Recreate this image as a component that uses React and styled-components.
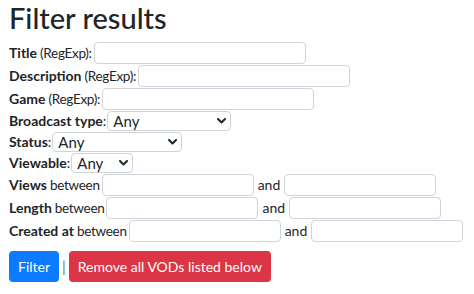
import React from "react";
import styled, { createGlobalStyle } from "styled-components";

const GlobalStyle = createGlobalStyle`
  body {
    margin: 0;
    background: #fff;
    color: #212529;
    font-family: Lato, "Open Sans", sans-serif;
    font-size: 14px;
  }
`;

const Page = styled.div`
  padding: 1px 9px;
`;

const Heading = styled.h2`
  font-size: 29px;
  font-weight: 500;
  line-height: 1.2;
  margin: 0 0 6px;
`;

const Form = styled.form`
  display: flex;
  flex-direction: column;
  gap: 1px;
`;

const Row = styled.div`
  display: flex;
  align-items: center;
  white-space: nowrap;
  line-height: 20px;
`;

const Label = styled.strong`
  font-weight: 700;
`;

const Hint = styled.span`
  margin-left: 3px;
  font-size: 13.5px;
  letter-spacing: -0.3px;
`;

const TextInput = styled.input`
  box-sizing: border-box;
  width: ${(p) => p.$w}px;
  height: 22px;
  margin-left: ${(p) => (p.$gap ?? 2)}px;
  padding: 0 6px;
  border: 1px solid #ced4da;
  border-radius: 4px;
  background: #fff;
  font: inherit;
  outline: none;
`;

const SelectWrap = styled.span`
  position: relative;
  display: inline-flex;
  margin-left: 1px;
`;

const Select = styled.select`
  box-sizing: border-box;
  appearance: none;
  width: ${(p) => p.$w}px;
  height: 20px;
  padding: 0 20px 0 5px;
  border: 1px solid #ced4da;
  border-radius: 4px;
  background: #fff;
  color: #212529;
  font: inherit;
  font-size: 15px;
  line-height: 18px;
  outline: none;
`;

const Chevron = styled.svg`
  position: absolute;
  right: 5px;
  top: 7px;
  width: 9px;
  height: 6px;
  pointer-events: none;
`;

const And = styled.span`
  margin: 0 4px 0 4px;
`;

const Actions = styled.div`
  display: flex;
  align-items: center;
  gap: 3px;
  margin-top: 8px;
`;

const Button = styled.button`
  height: 31px;
  padding: 0 9px;
  border: none;
  border-radius: 4px;
  color: #fff;
  font: inherit;
  font-size: 14px;
  background: ${(p) => (p.$variant === "danger" ? "#dc3545" : "#0d7bff")};
`;

const Divider = styled.span`
  color: #6c757d;
  font-size: 15px;
`;

function Dropdown({ width }) {
  return (
    <SelectWrap>
      <Select $w={width} defaultValue="any">
        <option value="any">Any</option>
      </Select>
      <Chevron viewBox="0 0 9 6">
        <path d="M1 1l3.5 3.5L8 1" fill="none" stroke="#212529" strokeWidth="2" strokeLinecap="round" strokeLinejoin="round" />
      </Chevron>
    </SelectWrap>
  );
}

function RangeRow({ label }) {
  return (
    <Row>
      <Label>{label}</Label>
      <Hint>between</Hint>
      <TextInput $w={152} />
      <And>and</And>
      <TextInput $w={152} $gap={0} />
    </Row>
  );
}

export default function App() {
  return (
    <Page>
      <GlobalStyle />
      <Heading>Filter results</Heading>
      <Form onSubmit={(e) => e.preventDefault()}>
        <Row>
          <Label>Title</Label>
          <Hint>(RegExp):</Hint>
          <TextInput $w={212} />
        </Row>
        <Row>
          <Label>Description</Label>
          <Hint>(RegExp):</Hint>
          <TextInput $w={212} />
        </Row>
        <Row>
          <Label>Game</Label>
          <Hint>(RegExp):</Hint>
          <TextInput $w={212} />
        </Row>
        <Row>
          <Label>Broadcast type</Label>:
          <Dropdown width={124} />
        </Row>
        <Row>
          <Label>Status</Label>:
          <Dropdown width={130} />
        </Row>
        <Row>
          <Label>Viewable</Label>:
          <Dropdown width={62} />
        </Row>
        <RangeRow label="Views" />
        <RangeRow label="Length" />
        <RangeRow label="Created at" />
        <Actions>
          <Button type="submit">Filter</Button>
          <Divider>|</Divider>
          <Button type="button" $variant="danger">Remove all VODs listed below</Button>
        </Actions>
      </Form>
    </Page>
  );
}
